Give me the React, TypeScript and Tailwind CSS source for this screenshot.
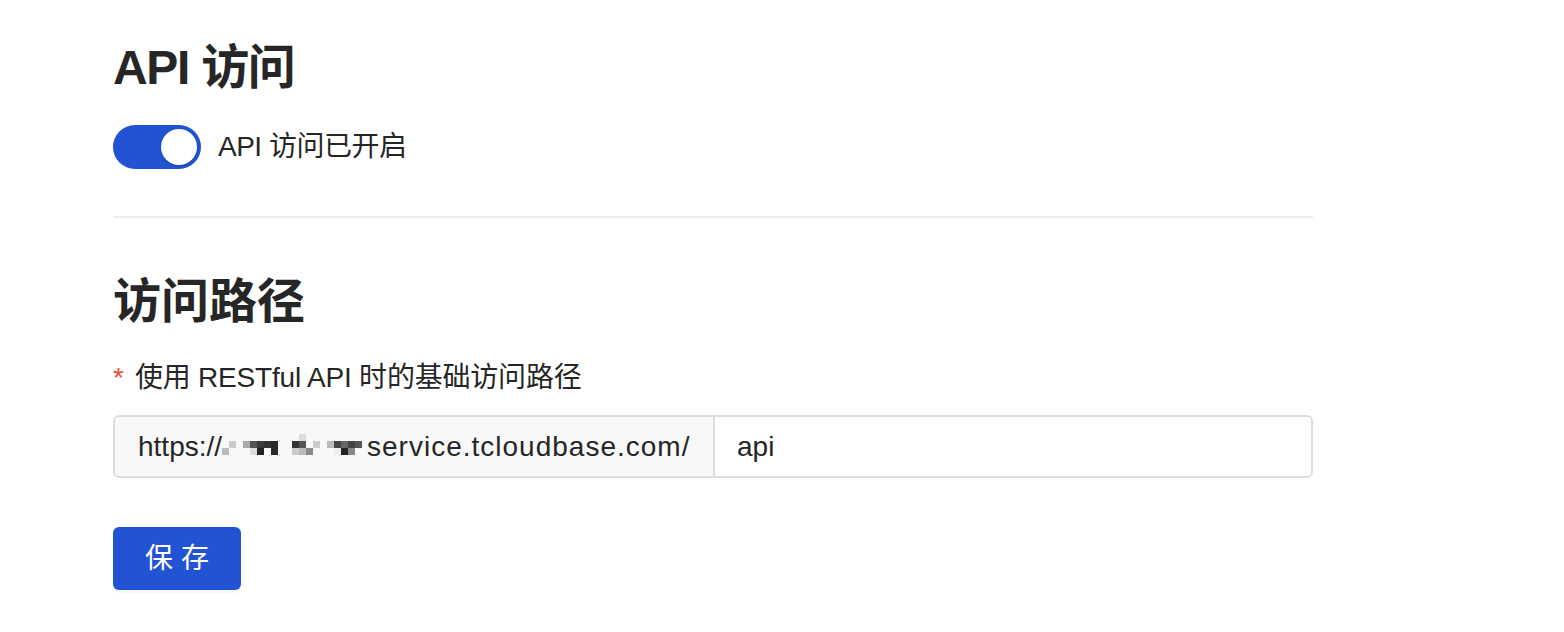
import { useState } from "react";

const font = {
  fontFamily: '"Liberation Sans", "Noto Sans CJK SC", sans-serif',
};

// mosaic over the masked part of the domain: [col, row, colour], 7px cells
const mosaic: [number, number, string][] = [
  [11, 0, "#dddddd"],
  [1, 1, "#cccccc"],
  [3, 1, "#aaaaaa"],
  [4, 1, "#555555"],
  [5, 1, "#3a3a3a"],
  [6, 1, "#333333"],
  [7, 1, "#2a2a2a"],
  [10, 1, "#333333"],
  [11, 1, "#555555"],
  [13, 1, "#cccccc"],
  [15, 1, "#bbbbbb"],
  [16, 1, "#444444"],
  [17, 1, "#666666"],
  [18, 1, "#444444"],
  [19, 1, "#555555"],
  [0, 2, "#bbbbbb"],
  [4, 2, "#dddddd"],
  [5, 2, "#222222"],
  [7, 2, "#2a2a2a"],
  [10, 2, "#cccccc"],
  [11, 2, "#bbbbbb"],
  [12, 2, "#888888"],
  [16, 2, "#eeeeee"],
  [17, 2, "#222222"],
  [18, 2, "#888888"],
];

function Mosaic() {
  return (
    <svg width="140" height="28" viewBox="0 0 140 28" className="shrink-0">
      {mosaic.map(([c, r, fill], i) => (
        <rect key={i} x={c * 7} y={r * 7 + 1} width={7} height={7} fill={fill} />
      ))}
    </svg>
  );
}

function App() {
  const [enabled, setEnabled] = useState(true);
  const [path, setPath] = useState("api");

  return (
    <div className="w-[1564px] h-[632px] bg-white text-[#262626]" style={font}>
      <div className="pl-[113px] w-[1313px] pt-[40px]">
        {/* API access */}
        <h1 className="text-[48px] leading-[56px] font-semibold tracking-[-1.3px]">
          API 访问
        </h1>
        <div className="mt-[29px] flex items-center gap-[17px] h-[44px]">
          <button
            onClick={() => setEnabled(!enabled)}
            className={`w-[88px] h-[44px] rounded-full flex items-center px-[4px] ${
              enabled ? "bg-[#2153d4] justify-end" : "bg-[#c7c7c7] justify-start"
            }`}
          >
            <span className="w-[36px] h-[36px] rounded-full bg-white shadow-[0_1px_3px_rgba(0,0,0,0.2)]" />
          </button>
          <span className="text-[28px] leading-[40px] tracking-[-0.5px]">
            API 访问已开启
          </span>
        </div>

        <div className="mt-[47px] h-[2px] w-[1200px] bg-[#eeeeee]" />

        {/* access path */}
        <h2 className="mt-[56px] text-[48px] leading-[56px] font-semibold">
          访问路径
        </h2>
        <div className="mt-[28px] text-[28px] leading-[40px] flex items-center">
          <span className="text-[#f04b3e] mr-[11px]">*</span>
          <span className="tracking-[-0.2px]">使用 RESTful API 时的基础访问路径</span>
        </div>

        <div className="mt-[17px] w-[1200px] h-[63px] flex border-2 border-[#dddddd] rounded-[6px] overflow-hidden">
          <div className="w-[600px] shrink-0 bg-[#f8f8f8] border-r-2 border-[#dddddd] flex items-center pl-[23px] text-[28px] text-[#262626]">
            <span>https://</span>
            <Mosaic />
            <span className="ml-[5px] tracking-[1px]">service.tcloudbase.com/</span>
          </div>
          <input
            value={path}
            onChange={(e) => setPath(e.target.value)}
            className="flex-1 pl-[22px] text-[28px] outline-none bg-white text-[#262626]"
            style={font}
          />
        </div>

        <button className="mt-[49px] w-[128px] h-[63px] rounded-[6px] bg-[#2153d4] text-white text-[28px] shadow-[0_3px_0_rgba(0,0,0,0.03)]">
          保 存
        </button>
      </div>
    </div>
  );
}

export default App;
